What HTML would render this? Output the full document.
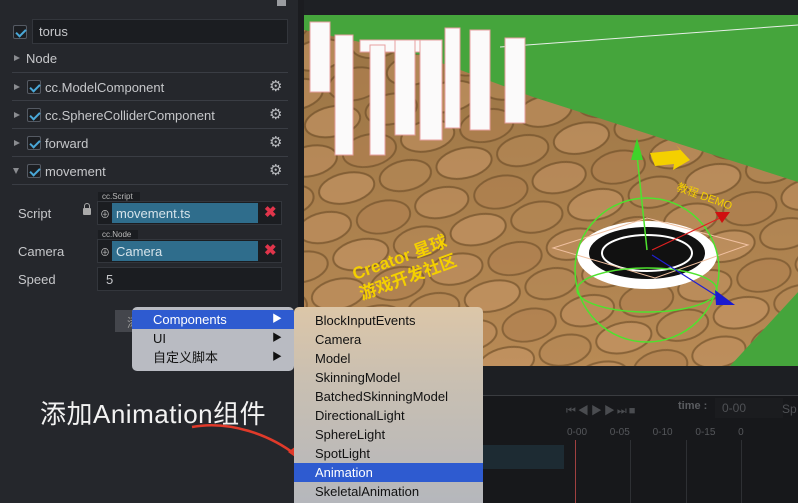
<!DOCTYPE html>
<html><head><meta charset="utf-8"><style>
*{margin:0;padding:0;box-sizing:border-box}
body{width:798px;height:503px;overflow:hidden;background:#222429;font-family:"Liberation Sans","Noto Sans CJK SC",sans-serif;position:relative;color:#c8c9cc}
.a{position:absolute}
.t{font-size:12px;color:#c6c7ca;white-space:nowrap}
.cb{position:absolute;width:14px;height:14px;border:1px solid #555a63;background:#1c1e22;border-radius:2px}
.cb:after{content:"";position:absolute;left:4px;top:1px;width:4px;height:8px;border:solid #4aa8d8;border-width:0 2px 2px 0;transform:rotate(45deg)}
.sep{position:absolute;left:12px;width:276px;height:1px;background:#3a3d44}
.tri{position:absolute;width:0;height:0;border-left:6px solid #8a8c90;border-top:3.5px solid transparent;border-bottom:3.5px solid transparent}
.gear{position:absolute;font-size:15px;color:#b9bbbf}
.mi{position:absolute;left:0;right:0;height:19px;font-size:13px;color:#111;padding-left:21px;line-height:19px}
</style></head><body>
<div class="a" style="left:0;top:0;width:298px;height:503px;background:#25272c"></div>
<div class="a" style="left:298px;top:0;width:6px;height:503px;background:#1b1c20"></div>
<div class="a" style="left:277px;top:0;width:9px;height:6px;background:#9a9ca0"></div>
<div class="cb" style="left:13px;top:25px"></div>
<div class="a" style="left:32px;top:19px;width:256px;height:25px;background:#1b1d21;border:1px solid #33363c"></div>
<div class="a t" style="left:39px;top:24px;font-size:13px">torus</div>
<div class="tri" style="left:14px;top:55px"></div>
<div class="a t" style="left:26px;top:51px;font-size:13px">Node</div>
<div class="sep" style="top:72px"></div>
<div class="tri" style="left:14px;top:84px"></div><div class="cb" style="left:27px;top:80px"></div><div class="a t" style="left:45px;top:80px;font-size:13px">cc.ModelComponent</div><div class="gear" style="left:269px;top:77px">⚙</div>
<div class="sep" style="top:100px"></div>
<div class="tri" style="left:14px;top:112px"></div><div class="cb" style="left:27px;top:108px"></div><div class="a t" style="left:45px;top:108px;font-size:13px">cc.SphereColliderComponent</div><div class="gear" style="left:269px;top:105px">⚙</div>
<div class="sep" style="top:128px"></div>
<div class="tri" style="left:14px;top:140px"></div><div class="cb" style="left:27px;top:136px"></div><div class="a t" style="left:45px;top:136px;font-size:13px">forward</div><div class="gear" style="left:269px;top:133px">⚙</div>
<div class="sep" style="top:156px"></div>
<div class="a" style="left:13px;top:168px;width:0;height:0;border-top:6px solid #8a8c90;border-left:3.5px solid transparent;border-right:3.5px solid transparent"></div><div class="cb" style="left:27px;top:164px"></div><div class="a t" style="left:45px;top:164px;font-size:13px">movement</div><div class="gear" style="left:269px;top:161px">⚙</div>
<div class="sep" style="top:184px"></div>
<div class="a t" style="left:18px;top:206px;font-size:13px">Script</div>
<div class="a" style="left:83px;top:208px;width:8px;height:7px;background:#aaa;border-radius:1px"></div>
<div class="a" style="left:84px;top:203px;width:6px;height:7px;border:1.5px solid #aaa;border-radius:3px 3px 0 0"></div>
<div class="a" style="left:98px;top:192px;width:42px;height:10px;background:#1b1d21;font-size:8px;color:#bbb;padding-left:4px;line-height:10px">cc.Script</div>
<div class="a" style="left:97px;top:201px;width:185px;height:24px;background:#1b1d21;border:1px solid #33363c"></div>
<div class="a" style="left:112px;top:203px;width:146px;height:20px;background:#2f6d8c"></div>
<div class="a t" style="left:116px;top:206px;font-size:13px;color:#d5e3ea">movement.ts</div>
<div class="a" style="left:100px;top:206px;font-size:10px;color:#bbb">⊕</div>
<div class="a" style="left:264px;top:203px;font-size:15px;color:#e0354b;font-weight:bold">✖</div>
<div class="a t" style="left:18px;top:244px;font-size:13px">Camera</div>
<div class="a" style="left:98px;top:230px;width:40px;height:10px;background:#1b1d21;font-size:8px;color:#bbb;padding-left:4px;line-height:10px">cc.Node</div>
<div class="a" style="left:97px;top:239px;width:185px;height:24px;background:#1b1d21;border:1px solid #33363c"></div>
<div class="a" style="left:112px;top:241px;width:146px;height:20px;background:#2f6d8c"></div>
<div class="a t" style="left:116px;top:244px;font-size:13px;color:#d5e3ea">Camera</div>
<div class="a" style="left:100px;top:244px;font-size:10px;color:#bbb">⊕</div>
<div class="a" style="left:264px;top:241px;font-size:15px;color:#e0354b;font-weight:bold">✖</div>
<div class="a t" style="left:18px;top:272px;font-size:13px">Speed</div>
<div class="a" style="left:97px;top:267px;width:185px;height:24px;background:#1b1d21;border:1px solid #33363c"></div>
<div class="a t" style="left:106px;top:272px;font-size:13px">5</div>
<div class="a" style="left:115px;top:310px;width:22px;height:22px;background:#44464c;color:#999;font-size:12px;padding:4px 0 0 12px">添</div>
<div class="a" style="left:40px;top:394px;font-size:26px;color:#f2f2f2;white-space:nowrap;letter-spacing:0.5px">添加Animation组件</div>

<div class="a" style="left:304px;top:0;width:494px;height:15px;background:#1e2024"></div>
<svg class="a" style="left:304px;top:15px" width="494" height="355" viewBox="304 15 494 355">
<defs>
<linearGradient id="fl" x1="0" y1="0" x2="0" y2="1"><stop offset="0" stop-color="#9a7444"/><stop offset="1" stop-color="#b88a55"/></linearGradient>
<pattern id="st" width="120" height="68" patternUnits="userSpaceOnUse" patternTransform="rotate(-12)">
<ellipse cx="30" cy="18" rx="27" ry="15" fill="#c09060" stroke="#6a4a26" stroke-width="2"/>
<ellipse cx="90" cy="20" rx="27" ry="16" fill="#b08050" stroke="#6a4a26" stroke-width="2"/>
<ellipse cx="60" cy="52" rx="28" ry="15" fill="#c59565" stroke="#6a4a26" stroke-width="2"/>
<ellipse cx="0" cy="52" rx="26" ry="15" fill="#b58856" stroke="#6a4a26" stroke-width="2"/>
<ellipse cx="120" cy="52" rx="26" ry="15" fill="#b58856" stroke="#6a4a26" stroke-width="2"/>
</pattern></defs>
<rect x="304" y="15" width="494" height="355" fill="#45a53c"/>
<line x1="500" y1="47" x2="798" y2="25" stroke="#e8efe8" stroke-width="1"/>
<polygon points="304,30 420,55 533,97 798,182 798,292 730,366 304,366" fill="url(#fl)"/>
<polygon points="304,30 420,55 533,97 798,182 798,292 730,366 304,366" fill="url(#st)" opacity=".6"/>
<g fill="#fbfafa" stroke="#e7a0a0" stroke-width="1">
<rect x="310" y="22" width="20" height="70"/><rect x="335" y="35" width="18" height="120"/><rect x="360" y="40" width="70" height="12"/><rect x="370" y="45" width="15" height="110"/><rect x="395" y="40" width="20" height="95"/><rect x="420" y="40" width="22" height="100"/><rect x="445" y="28" width="15" height="100"/><rect x="470" y="30" width="20" height="100"/><rect x="505" y="38" width="20" height="85"/></g>
<text x="355" y="280" fill="#f4d000" font-size="17" font-weight="bold" transform="rotate(-20 355 280)" font-family="Liberation Sans,Noto Sans CJK SC,sans-serif">Creator 星球</text>
<text x="362" y="300" fill="#f4d000" font-size="17" font-weight="bold" transform="rotate(-20 362 300)" font-family="Liberation Sans,Noto Sans CJK SC,sans-serif">游戏开发社区</text>
<polygon points="650,153 680,150 676,145 690,160 673,170 674,164 655,166" fill="#f4d000"/>
<text x="676" y="190" fill="#f4d000" font-size="11" transform="rotate(20 676 190)">教程 DEMO</text>
<ellipse cx="647" cy="255" rx="70" ry="34" fill="#fff"/>
<ellipse cx="647" cy="253" rx="58" ry="26" fill="#111"/>
<ellipse cx="647" cy="253" rx="45" ry="18" fill="none" stroke="#fff" stroke-width="2"/>
<polygon points="553,248 647,218 748,245 655,278" fill="none" stroke="#f0c0a0" stroke-width="1"/>
<circle cx="647" cy="270" r="72" fill="none" stroke="#4ee22e" stroke-width="1.5"/>
<ellipse cx="647" cy="290" rx="70" ry="22" fill="none" stroke="#4ee22e" stroke-width="1.5"/>
<line x1="647" y1="250" x2="637" y2="155" stroke="#4ee22e" stroke-width="1.5"/>
<polygon points="631,160 637,138 643,160" fill="#3fd32a"/>
<line x1="652" y1="250" x2="720" y2="218" stroke="#e02020" stroke-width="1.2"/>
<polygon points="715,212 730,212 722,223" fill="#d01010"/>
<line x1="652" y1="255" x2="720" y2="298" stroke="#2020d0" stroke-width="1.2"/>
<polygon points="715,290 735,305 716,305" fill="#1a1ad0"/>
</svg>
<div class="a" style="left:304px;top:366px;width:494px;height:137px;background:#1d1f23"></div>
<div class="a" style="left:304px;top:395px;width:494px;height:1px;background:#3a3c40"></div>
<div class="a" style="left:304px;top:396px;width:494px;height:107px;background:#17181b"></div>
<div class="a" style="left:304px;top:445px;width:260px;height:24px;background:#1d2b33"></div>
<div class="a" style="left:566px;top:402px;font-size:11px;color:#4a4c50;letter-spacing:2px">⏮◀▶▶⏭■</div>
<div class="a" style="left:678px;top:400px;font-size:11px;color:#5a5c60;font-weight:bold">time :</div>
<div class="a" style="left:715px;top:398px;width:68px;height:20px;background:#1b1c1f;font-size:12px;color:#4f5155;padding:3px 0 0 7px">0-00</div>
<div class="a" style="left:782px;top:402px;font-size:12px;color:#4f5155">Sp</div>
<div class="a" style="left:567px;top:427px;font-size:10px;color:#55575b;word-spacing:20px;white-space:nowrap">0-00 0-05 0-10 0-15 0</div>
<div class="a" style="left:575px;top:440px;width:1px;height:63px;background:#a04040"></div>
<div class="a" style="left:630px;top:440px;width:1px;height:63px;background:#2e3034"></div>
<div class="a" style="left:686px;top:440px;width:1px;height:63px;background:#2e3034"></div>
<div class="a" style="left:741px;top:440px;width:1px;height:63px;background:#2e3034"></div>
<svg class="a" style="left:0;top:0" width="798" height="503"><path d="M192,427 C230,420 270,435 296,455" fill="none" stroke="#e03a2a" stroke-width="2.5"/><polygon points="288,452 302,462 296,446" fill="#e03a2a"/></svg>
<div class="a" style="left:132px;top:307px;width:162px;height:64px;background:#b9bbc2;border-radius:5px;overflow:hidden">
<div class="mi" style="top:3px;background:#2e5bd0;color:#fff">Components<span style="position:absolute;left:140px;font-size:10px">▶</span></div>
<div class="mi" style="top:22px">UI<span style="position:absolute;left:140px;font-size:10px">▶</span></div>
<div class="mi" style="top:41px">自定义脚本<span style="position:absolute;left:140px;font-size:10px">▶</span></div>
</div>
<div class="a" style="left:294px;top:307px;width:189px;height:196px;background:linear-gradient(#dcc6a8,#c8bfb2 40%,#b5b7bc);border-radius:5px 5px 0 0;overflow:hidden">
<div class="mi" style="top:4px">BlockInputEvents</div>
<div class="mi" style="top:23px">Camera</div>
<div class="mi" style="top:42px">Model</div>
<div class="mi" style="top:61px">SkinningModel</div>
<div class="mi" style="top:80px">BatchedSkinningModel</div>
<div class="mi" style="top:99px">DirectionalLight</div>
<div class="mi" style="top:118px">SphereLight</div>
<div class="mi" style="top:137px">SpotLight</div>
<div class="mi" style="top:156px;background:#2e5bd0;color:#fff">Animation</div>
<div class="mi" style="top:175px">SkeletalAnimation</div>
</div>
</body></html>
